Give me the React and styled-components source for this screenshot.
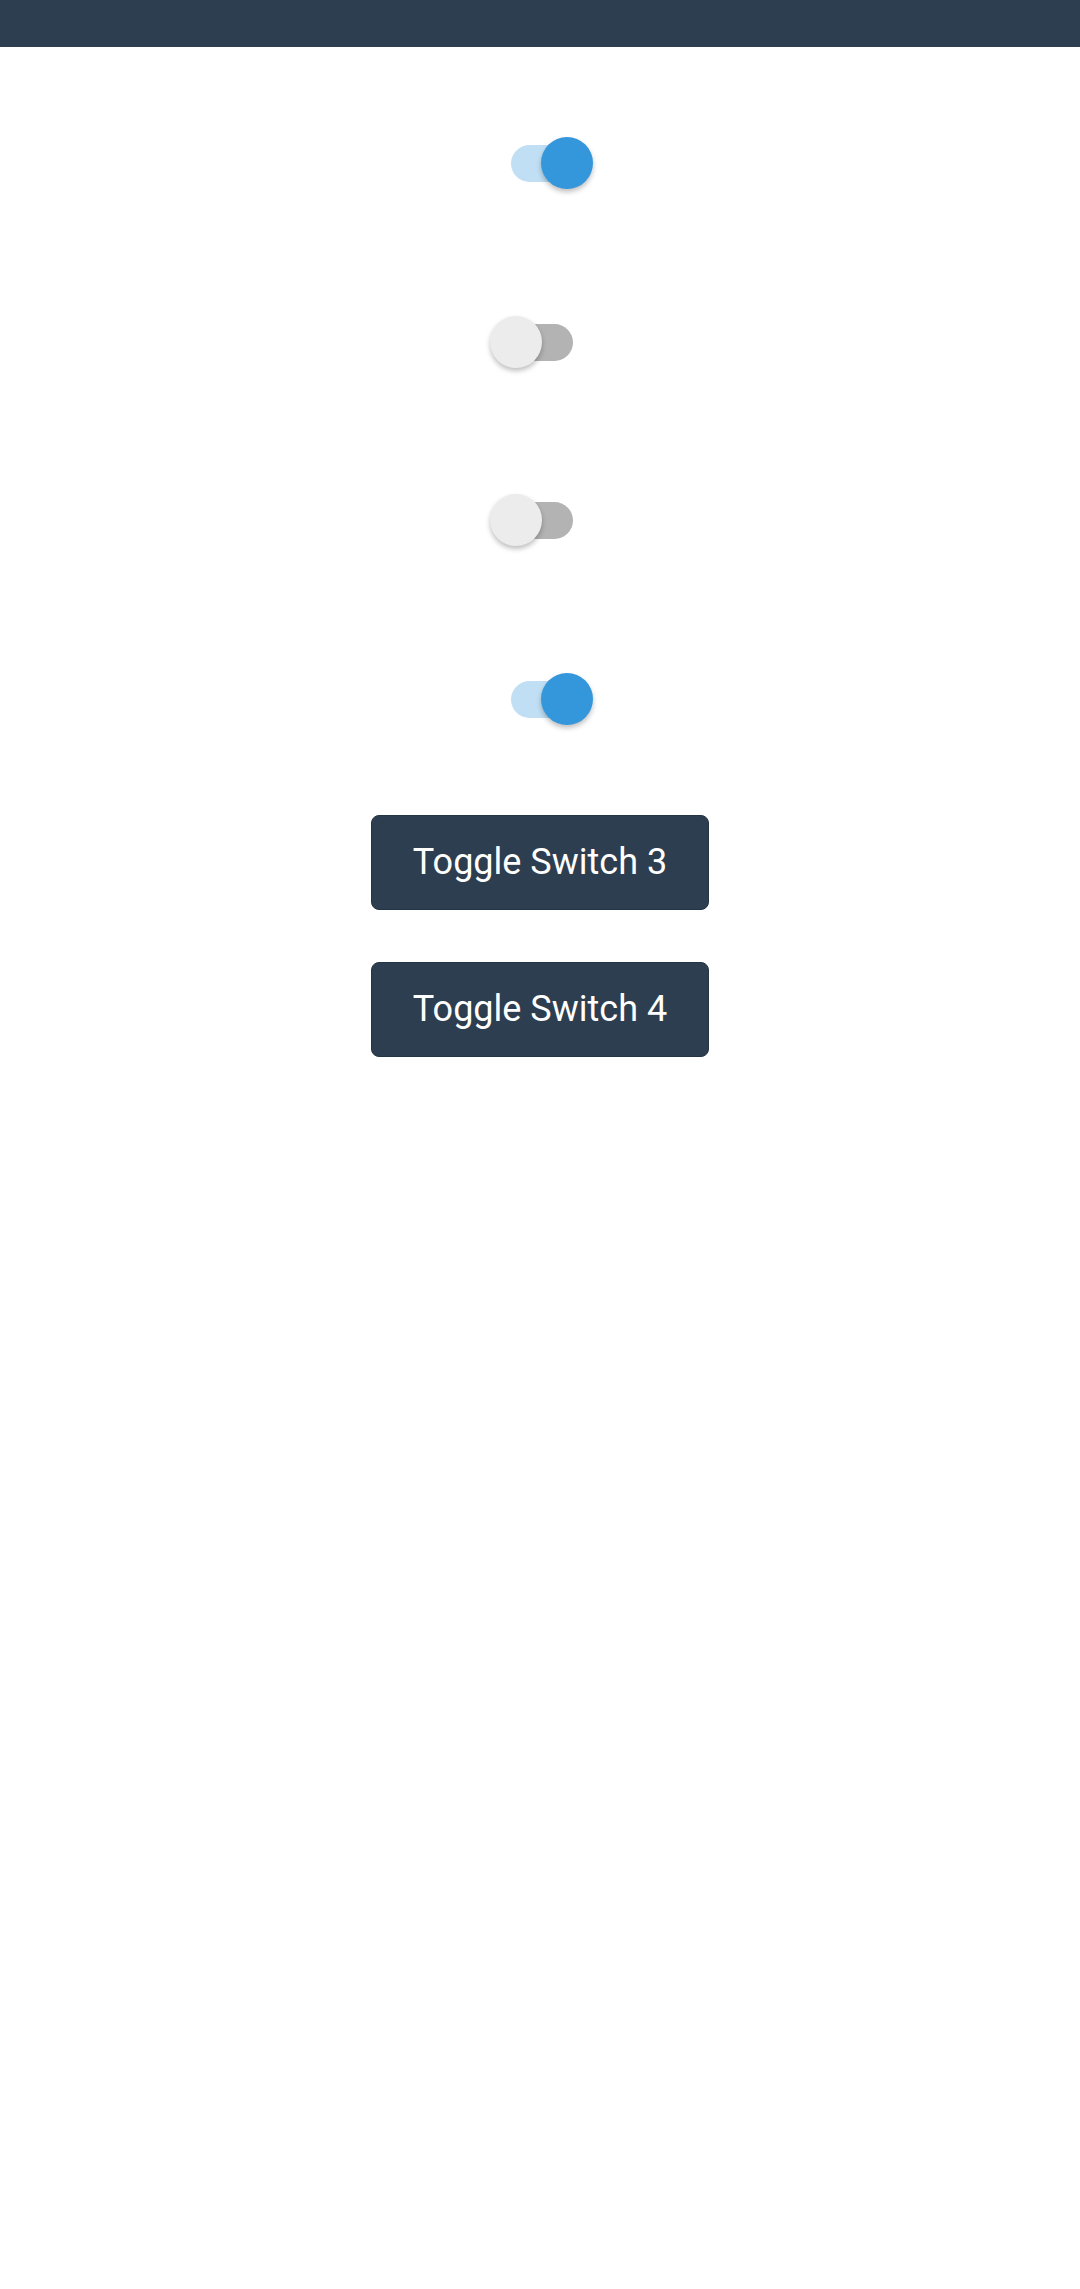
import React, { useState } from "react";
import styled, { createGlobalStyle } from "styled-components";

const GlobalStyle = createGlobalStyle`
  html, body {
    margin: 0;
    padding: 0;
    background: #ffffff;
    font-family: Roboto, "Liberation Sans", sans-serif;
  }
`;

const Header = styled.div`
  height: 47px;
  background: #2c3e50;
`;

const Main = styled.main`
  display: flex;
  flex-direction: column;
  align-items: center;
  padding-top: 90px;
`;

const Switches = styled.div`
  display: flex;
  flex-direction: column;
  align-items: center;
  gap: 126.5px;
`;

const SwitchBox = styled.div`
  position: relative;
  width: 103px;
  height: 52px;
  margin-left: 3px;
  cursor: pointer;
`;

const Track = styled.div`
  position: absolute;
  left: 21px;
  top: 8px;
  width: 62px;
  height: 37px;
  border-radius: 19px;
  background: ${(props) => (props.on ? "#c1dff4" : "#b3b3b3")};
`;

const Knob = styled.div`
  position: absolute;
  top: 0;
  left: ${(props) => (props.on ? "51px" : "0")};
  width: 52px;
  height: 52px;
  border-radius: 50%;
  background: ${(props) => (props.on ? "#3597db" : "#ececec")};
  box-shadow: 0 3px 5px rgba(0, 0, 0, 0.25);
`;

const Buttons = styled.div`
  display: flex;
  flex-direction: column;
  align-items: center;
  gap: 52px;
  margin-top: 90px;
`;

const Button = styled.button`
  width: 338px;
  height: 95px;
  border: 1px solid #243445;
  border-radius: 8px;
  background: #2c3e50;
  color: #ffffff;
  font-family: Roboto, "Liberation Sans", sans-serif;
  font-size: 36px;
  cursor: pointer;
`;

const Switch = ({ on, onToggle }) => (
  <SwitchBox onClick={onToggle}>
    <Track on={on ? 1 : 0} />
    <Knob on={on ? 1 : 0} />
  </SwitchBox>
);

const App = () => {
  const [switches, setSwitches] = useState([true, false, false, true]);
  const toggle = (i) =>
    setSwitches((s) => s.map((v, j) => (j === i ? !v : v)));

  return (
    <>
      <GlobalStyle />
      <Header />
      <Main>
        <Switches>
          {switches.map((on, i) => (
            <Switch key={i} on={on} onToggle={() => toggle(i)} />
          ))}
        </Switches>
        <Buttons>
          <Button onClick={() => toggle(2)}>Toggle Switch 3</Button>
          <Button onClick={() => toggle(3)}>Toggle Switch 4</Button>
        </Buttons>
      </Main>
    </>
  );
};

export default App;
